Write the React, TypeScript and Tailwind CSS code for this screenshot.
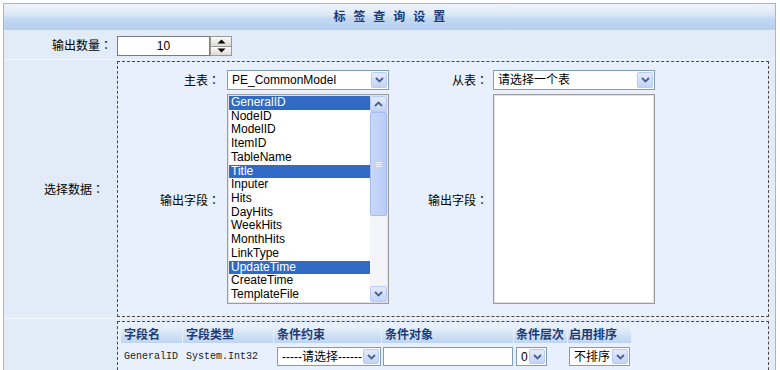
import React from 'react';

const fields = [
  { name: 'GeneralID', selected: true },
  { name: 'NodeID' },
  { name: 'ModelID' },
  { name: 'ItemID' },
  { name: 'TableName' },
  { name: 'Title', selected: true },
  { name: 'Inputer' },
  { name: 'Hits' },
  { name: 'DayHits' },
  { name: 'WeekHits' },
  { name: 'MonthHits' },
  { name: 'LinkType' },
  { name: 'UpdateTime', selected: true },
  { name: 'CreateTime' },
  { name: 'TemplateFile' },
];

// full-width colon, centred like the original font draws it
const Label: React.FC<{ text: string }> = ({ text }) => (
  <span className="whitespace-nowrap">
    {text}
    <span className="font-['Noto_Sans_CJK_JP',sans-serif]">：</span>
  </span>
);

const Chevron: React.FC<{ up?: boolean }> = ({ up }) => (
  <svg width="9" height="6" viewBox="0 0 9 6">
    <path
      d={up ? 'M1 5 L4.5 1.5 L8 5' : 'M1 1 L4.5 4.5 L8 1'}
      fill="none"
      stroke="#4d6185"
      strokeWidth="1.8"
    />
  </svg>
);

const DropButton: React.FC<{ up?: boolean; className?: string }> = ({ up, className }) => (
  <span
    className={`flex w-[16px] items-center justify-center rounded-[2px] border border-[#b9cbf3] bg-[linear-gradient(#e3ebfd,#c3d4f8)] ${className ?? ''}`}
  >
    <Chevron up={up} />
  </span>
);

const XpSelect: React.FC<{ value: string; className: string }> = ({ value, className }) => (
  <div className={`flex items-stretch border border-[#7f9db9] bg-white p-[1px] ${className}`}>
    <span className="flex flex-1 items-center overflow-hidden whitespace-nowrap pl-[3px]">{value}</span>
    <DropButton />
  </div>
);

const Scrollbar: React.FC = () => (
  <div className="flex w-[17px] flex-col bg-[#f3f5fb]">
    <DropButton up className="h-[16px] w-[17px]" />
    <div className="flex h-[104px] items-center justify-center rounded-[2px] border border-[#a4bcef] bg-[linear-gradient(90deg,#c9d8fa,#b8ccf6)]">
      <div className="flex flex-col gap-[1px]">
        <span className="h-px w-[6px] bg-[#eef3fe]" />
        <span className="h-px w-[6px] bg-[#eef3fe]" />
        <span className="h-px w-[6px] bg-[#eef3fe]" />
      </div>
    </div>
    <div className="flex-1" />
    <DropButton className="h-[16px] w-[17px]" />
  </div>
);

export default function App() {
  return (
    <div className="h-[370px] w-[780px] overflow-hidden bg-white font-['Liberation_Sans','Noto_Sans_CJK_SC',sans-serif] text-[12px] text-black">
      <div className="ml-[3px] mt-[3px] w-[773px] border border-[#9fb7d4] bg-[#e2ecf8]">
        {/* title */}
        <div className="flex h-[26px] items-center justify-center bg-[linear-gradient(#eef4fc_0%,#dfe9f7_38%,#c2d8f3_58%,#b5cff0_100%)] pl-[2px] font-bold tracking-[2.3px] text-[#1d3b75]">
          标 签 查 询 设 置
        </div>

        {/* 输出数量 */}
        <div className="flex h-[30px] border-b border-[#f2f7fd]">
          <div className="flex w-[112px] items-center justify-end pr-[4px] pt-[2px]">
            <Label text="输出数量" />
          </div>
          <div className="flex items-center pl-[1px] pt-[3px]">
            <div className="flex h-[20px] w-[93px] items-center justify-center border border-[#7b7b7b] bg-white">10</div>
            <div className="flex h-[20px] w-[22px] flex-col border border-[#9a9a9a] bg-[#ecebe6]">
              <div className="flex flex-1 items-center justify-center border-b border-[#9a9a9a] bg-[linear-gradient(#fbfbf9,#dcdad2)]">
                <svg width="9" height="5" viewBox="0 0 9 5"><path d="M0.5 4.5 L4.5 0.5 L8.5 4.5 Z" fill="#000" /></svg>
              </div>
              <div className="flex flex-1 items-center justify-center bg-[linear-gradient(#fbfbf9,#dcdad2)]">
                <svg width="9" height="5" viewBox="0 0 9 5"><path d="M0.5 0.5 L4.5 4.5 L8.5 0.5 Z" fill="#000" /></svg>
              </div>
            </div>
          </div>
        </div>

        {/* 选择数据 */}
        <div className="flex h-[259px] border-b border-[#f2f7fd]">
          <div className="flex w-[112px] items-center justify-end pr-[12px]">
            <Label text="选择数据" />
          </div>
          <div className="pl-[1px] pt-[1px]">
            <div className="h-[256px] w-[652px] border border-dashed border-[#4a4a4a] bg-[#e7f0fc] pt-[8px]">
              <div className="grid grid-cols-[109px_162px_104px_162px] grid-rows-[20px_210px] gap-y-[4px]">
                <div className="flex items-center justify-end pr-[7px]">
                  <Label text="主表" />
                </div>
                <XpSelect value="PE_CommonModel" className="h-[20px] w-[162px]" />
                <div className="flex items-center justify-end pr-[5px]">
                  <Label text="从表" />
                </div>
                <XpSelect value="请选择一个表" className="h-[20px] w-[162px]" />

                <div className="flex items-center justify-end pr-[7px] pt-[3px]">
                  <Label text="输出字段" />
                </div>
                <div className="flex h-[210px] w-[162px] border border-[#9c9c9c] bg-white">
                  <div className="flex flex-1 border border-[#e2e1e4]">
                    <div className="flex-1 overflow-hidden">
                      {fields.map((f) => (
                        <div
                          key={f.name}
                          className={`h-[13.72px] whitespace-nowrap pl-[2px] leading-[13.72px] ${f.selected ? 'bg-[#316ac5] text-white' : ''}`}
                        >
                          {f.name}
                        </div>
                      ))}
                    </div>
                    <Scrollbar />
                  </div>
                </div>
                <div className="flex items-center justify-end pr-[5px] pt-[3px]">
                  <Label text="输出字段" />
                </div>
                <div className="h-[210px] w-[162px] border border-[#9c9c9c] bg-white">
                  <div className="h-full border border-[#e2e1e4]" />
                </div>
              </div>
            </div>
          </div>
        </div>

        {/* 条件 */}
        <div className="flex h-[60px]">
          <div className="w-[112px]" />
          <div className="pl-[1px] pt-[2px]">
            <div className="h-[80px] w-[652px] border border-dashed border-[#4a4a4a] bg-[#e7f0fc] pl-[3px] pt-[4px]">
              <div className="flex flex-col gap-[1px]">
                <div className="flex gap-[1px] font-bold text-[#1d3b75]">
                  <div className="flex h-[17px] w-[61px] items-center bg-[linear-gradient(#e9f1fb,#bdd4f1)] pl-[3px]">字段名</div>
                  <div className="flex h-[17px] w-[90px] items-center bg-[linear-gradient(#e9f1fb,#bdd4f1)] pl-[3px]">字段类型</div>
                  <div className="flex h-[17px] w-[107px] items-center bg-[linear-gradient(#e9f1fb,#bdd4f1)] pl-[3px]">条件约束</div>
                  <div className="flex h-[17px] w-[131px] items-center bg-[linear-gradient(#e9f1fb,#bdd4f1)] pl-[3px]">条件对象</div>
                  <div className="flex h-[17px] w-[53px] items-center bg-[linear-gradient(#e9f1fb,#bdd4f1)] pl-[2px]">条件层次</div>
                  <div className="flex h-[17px] w-[63px] items-center bg-[linear-gradient(#e9f1fb,#bdd4f1)] pl-[1px]">启用排序</div>
                </div>
                <div className="flex gap-[1px] pt-[3px]">
                  <div className="flex h-[19px] w-[61px] items-center pl-[3px] font-['Liberation_Mono',monospace] text-[10px] text-[#222]">GeneralID</div>
                  <div className="flex h-[19px] w-[90px] items-center pl-[3px] font-['Liberation_Mono',monospace] text-[10px] text-[#222]">System.Int32</div>
                  <div className="w-[107px] pl-[3px]">
                    <XpSelect value="-----请选择------" className="h-[19px] w-[104px]" />
                  </div>
                  <div className="w-[131px] pl-[1px]">
                    <div className="h-[19px] w-[130px] border border-[#7f9db9] bg-white" />
                  </div>
                  <div className="w-[53px] pl-[2px]">
                    <XpSelect value="0" className="h-[19px] w-[31px]" />
                  </div>
                  <div className="w-[63px] pl-[1px]">
                    <XpSelect value="不排序" className="h-[19px] w-[61px]" />
                  </div>
                </div>
              </div>
            </div>
          </div>
        </div>
      </div>
    </div>
  );
}
